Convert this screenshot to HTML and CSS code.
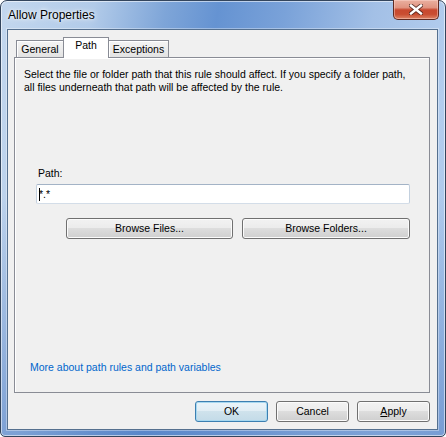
FILE: index.html
```html
<!DOCTYPE html>
<html>
<head>
<meta charset="utf-8">
<title>Allow Properties</title>
<link rel="stylesheet" href="styles.css">
</head>
<body>
<div class="window">
  <div class="titlebar">
    <span class="title">Allow Properties</span>
  </div>
  <div class="close-btn">
    <svg width="14" height="11" viewBox="0 0 14 11">
      <path d="M2 1.5 L12 9.5 M12 1.5 L2 9.5" stroke="#3a1a14" stroke-width="4.2" stroke-linecap="round" fill="none" opacity="0.75"/>
      <path d="M2 1.5 L12 9.5 M12 1.5 L2 9.5" stroke="#ffffff" stroke-width="2.4" stroke-linecap="square" fill="none"/>
    </svg>
  </div>
  <div class="client">
    <div class="tabs">
      <div class="tab tab-general">General</div>
      <div class="tab tab-path selected">Path</div>
      <div class="tab tab-exceptions">Exceptions</div>
    </div>
    <div class="panel">
      <p class="desc">Select the file or folder path that this rule should affect. If you specify a folder path, all files underneath that path will be affected by the rule.</p>
      <div class="path-group">
        <label class="path-label">Path:</label>
        <div class="input"><span class="caret"></span>*.*</div>
        <div class="browse-row">
          <button class="btn btn-browse-files">Browse Files...</button>
          <button class="btn btn-browse-folders">Browse Folders...</button>
        </div>
      </div>
      <div class="spacer"></div>
      <a class="link">More about path rules and path variables</a>
    </div>
    <div class="footer">
      <button class="btn btn-default">OK</button>
      <button class="btn">Cancel</button>
      <button class="btn"><u>A</u>pply</button>
    </div>
  </div>
</div>
</body>
</html>
```

FILE: styles.css
```css
html, body {
  margin: 0;
  padding: 0;
  background: #ffffff;
}

body {
  font-family: "Liberation Sans", Arial, sans-serif;
  font-size: 10.5px;
  color: #000;
}

.window {
  position: relative;
  width: 446px;
  height: 437px;
  box-sizing: border-box;
  border: 1px solid #33455d;
  border-radius: 7px 7px 5px 5px;
  padding: 0 7px 6px 6px;
  display: flex;
  flex-direction: column;
  background:
    linear-gradient(180deg, rgba(255,255,255,0) 0%, rgba(255,255,255,0) 45%, rgba(80,125,195,0.55) 100%),
    linear-gradient(100deg, #c3d7ee 0%, #b2cbe9 18%, #7ea5d8 32%, #6593d2 42%, #7aa2d9 55%, #a3c0e6 72%, #b3cdee 88%, #a7c3e8 100%);
  box-shadow: inset 0 0 0 1px rgba(255,255,255,0.55);
}

.titlebar {
  height: 28px;
  display: flex;
  align-items: center;
  padding-left: 1px;
  padding-bottom: 1px;
  box-sizing: border-box;
}

.title {
  font-size: 12px;
  color: #000;
  text-shadow: 0 0 6px rgba(255,255,255,0.95), 0 0 3px rgba(255,255,255,0.9);
}

.close-btn {
  position: absolute;
  top: -1px;
  right: 6px;
  width: 46px;
  height: 20px;
  box-sizing: border-box;
  border: 1px solid #5e2a22;
  border-top: none;
  border-radius: 0 0 5px 5px;
  background: linear-gradient(180deg, #eab0a0 0%, #e09380 40%, #c8492f 52%, #c94d31 75%, #dd8466 100%);
  box-shadow: inset 0 0 0 1px rgba(255,220,210,0.45);
  display: flex;
  align-items: center;
  justify-content: center;
}

.close-btn svg {
  display: block;
  margin-top: -1px;
}

.client {
  flex: 1;
  border: 1px solid #55708f;
  background: #f0f0f0;
  display: flex;
  flex-direction: column;
  box-shadow: 0 0 0 1px rgba(255,255,255,0.35);
}

.tabs {
  margin-top: 7px;
  height: 20px;
  display: flex;
  align-items: flex-end;
  padding-left: 8px;
  position: relative;
  z-index: 2;
}

.tab {
  box-sizing: border-box;
  height: 17px;
  border: 1px solid #898c95;
  border-bottom: none;
  background: linear-gradient(180deg, #f4f4f4 0%, #ececec 50%, #e2e2e2 100%);
  box-shadow: inset 1px 1px 0 #ffffff;
  display: flex;
  justify-content: center;
  padding-top: 2px;
  line-height: 13px;
}

.tab-general {
  width: 48px;
}

.tab-path {
  width: 46px;
  margin-left: -1px;
}

.tab-exceptions {
  width: 61px;
  margin-left: -1px;
}

.tab.selected {
  height: 21px;
  margin-bottom: -1px;
  background: #ffffff;
  box-shadow: none;
  padding-top: 1px;
  z-index: 3;
}

.panel {
  margin: 0 7px 0 6px;
  height: 336px;
  box-sizing: border-box;
  border: 1px solid #898c95;
  background: #f0f0f0;
  box-shadow: inset 1px 1px 0 #ffffff;
  display: flex;
  flex-direction: column;
  padding: 10px 19px 18px 9px;
  position: relative;
  z-index: 1;
}

.desc {
  margin: 0;
  line-height: 13px;
}

.path-group {
  margin-top: 73px;
  margin-left: 12px;
  display: flex;
  flex-direction: column;
}

.path-label {
  line-height: 13px;
  padding-left: 2px;
}

.input {
  margin-top: 4px;
  height: 20px;
  box-sizing: border-box;
  border: 1px solid;
  border-color: #a3b3c6 #c3d0de #d3dde8 #c3d0de;
  border-radius: 2px;
  background: #ffffff;
  display: flex;
  align-items: center;
  padding-left: 2px;
  line-height: 13px;
}

.caret {
  display: inline-block;
  width: 1px;
  height: 13px;
  background: #000;
  margin-right: -1px;
}

.browse-row {
  margin-top: 14px;
  display: flex;
  gap: 9px;
  padding-left: 30px;
}

.spacer {
  flex: 1;
}

.link {
  color: #0066cc;
  line-height: 13px;
  padding-left: 6px;
  align-self: flex-start;
}

.footer {
  margin: 8px 7px 7px 0;
  display: flex;
  justify-content: flex-end;
  gap: 8px;
}

.btn {
  font-family: "Liberation Sans", Arial, sans-serif;
  font-size: 10.5px;
  color: #000;
  height: 21px;
  width: 73px;
  box-sizing: border-box;
  border: 1px solid #707070;
  border-radius: 3px;
  background: linear-gradient(180deg, #f2f2f2 0%, #ebebeb 50%, #dddddd 50%, #cfcfcf 100%);
  box-shadow: inset 0 0 0 1px #fbfbfb;
  padding: 0;
  line-height: 13px;
  white-space: nowrap;
}

.btn.btn-browse-files {
  width: 167px;
}

.btn.btn-browse-folders {
  width: auto;
  flex: 1;
}

.btn u {
  text-decoration: underline;
}

.btn-default {
  border-color: #3c7fb1;
  background: linear-gradient(180deg, #eaf4fa 0%, #e0edf4 50%, #cfe2ec 50%, #c3dbe8 100%);
  box-shadow: inset 0 0 0 1px #a7d8f0;
}
```
